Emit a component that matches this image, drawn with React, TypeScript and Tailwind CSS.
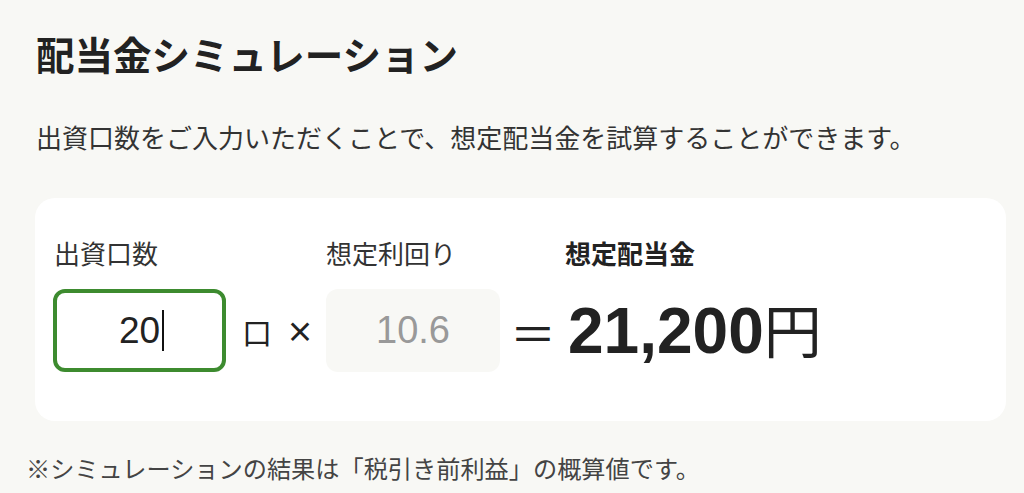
import React from 'react';

const jp = "font-['Noto_Sans_CJK_JP',sans-serif]";
const num = "font-['Liberation_Sans','Noto_Sans_CJK_JP',sans-serif]";

export default function App() {
  return (
    <div className={`min-h-[493px] bg-[#f8f8f5] pl-[35px] pr-[18px] pt-[26px] text-[#222] ${jp}`}>
      <h1 className="text-[38.5px] font-bold leading-[54px] pl-[1px]">配当金シミュレーション</h1>

      <p className="mt-[37px] text-[26px] leading-[40px] text-[#333] pl-[1px]">
        出資口数をご入力いただくことで、想定配当金を試算することができます。
      </p>

      <div className="mt-[41px] rounded-[20px] bg-white pl-[18px] pt-[37px] pb-[49px]">
        <div className="grid grid-cols-[173px_auto_auto_174px_auto_auto] items-center justify-start">
          <span className="pl-[1px] text-[26px] leading-[36px] text-[#333]">出資口数</span>
          <span />
          <span />
          <span className="text-[26px] leading-[36px] text-[#333]">想定利回り</span>
          <span />
          <span className="ml-[-3px] text-[26px] font-bold leading-[36px]">想定配当金</span>

          <div className="mt-[18px] flex h-[83px] items-center justify-center rounded-[12px] border-[4px] border-[#3d8b2f] bg-white pl-[4px]">
            <span className={`${num} text-[37px] leading-none text-[#222]`}>20</span>
            <span className="ml-[2px] h-[41px] w-[2px] bg-[#111]" />
          </div>
          <span className="mt-[18px] ml-[16px] text-[30px] leading-none">口</span>
          <span className="mt-[18px] ml-[14px] mr-[12px] text-[28px] font-semibold leading-none">×</span>
          <div className={`mt-[18px] flex h-[83px] items-center justify-center rounded-[12px] bg-[#f8f8f5] text-[38px] text-[#999] ${num}`}>
            10.6
          </div>
          <span className="mt-[18px] ml-[10px] mr-[12px] text-[46px] leading-none">＝</span>
          <span className={`mt-[18px] ${num} text-[64px] font-bold leading-none text-[#222]`}>
            21,200<span className={`${jp} font-normal text-[58px]`}>円</span>
          </span>
        </div>
      </div>

      <p className="mt-[30px] ml-[-9px] text-[24.2px] leading-[34px] text-[#444]">
        ※シミュレーションの結果は「税引き前利益」の概算値です。
      </p>
    </div>
  );
}
